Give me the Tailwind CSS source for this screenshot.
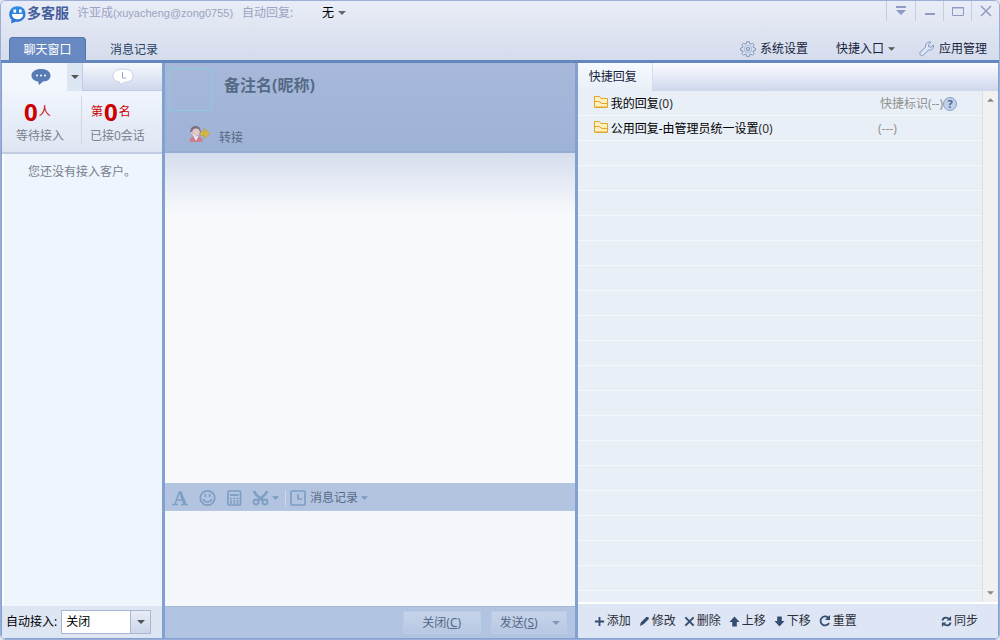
<!DOCTYPE html>
<html lang="zh-CN">
<head>
<meta charset="utf-8">
<meta name="viewport" content="width=device-width, initial-scale=1">
<title>多客服</title>
<script src="https://cdn.jsdelivr.net/npm/@tailwindcss/browser@4"></script>
</head>
<body class="flex h-screen flex-col overflow-hidden rounded-md border border-[#9daed6] bg-[#dfe5f3] font-['Noto_Sans','Noto_Sans_CJK_SC',sans-serif] text-xs leading-4 text-[#16233c]">

<header class="flex shrink-0 flex-col border-b-3 border-[#6587bf] bg-linear-to-b from-[#e9edf7] to-[#d5dcec]">
  <div class="flex h-9 items-start pl-2">
    <div class="flex h-6 items-center">
      <svg class="mt-1 h-[18px] w-[18px]" viewBox="0 0 18 18" aria-hidden="true">
        <defs><linearGradient id="lg" x1="0" y1="0" x2="0" y2="1"><stop offset="0" stop-color="#2f8fe8"/><stop offset="1" stop-color="#2a6fd6"/></linearGradient></defs>
        <path d="M8.500.2C3.500.2.200 3.600.200 8c0 2.600.8 4.200 2.300 5.500L2.200 17.500l4-1.800C12 16.500 16.500 13 16.500 8S13.500.2 8.500.2z" fill="url(#lg)"/>
        <rect x="4.500" y="3.500" width="2.600" height="3.200" fill="#fff"/><rect x="10" y="3.500" width="2.600" height="3.200" fill="#fff"/>
        <path d="M3 8h11c0 3.800-2.300 5.300-5.500 5.300S3 11.800 3 8z" fill="#fff"/>
      </svg>
      <h1 class="text-sm font-bold text-[#455f9c]">多客服</h1>
      <span class="ml-2 w-[165px] whitespace-nowrap text-[#9ba4c2]">许亚成<span class="font-['Liberation_Sans',sans-serif] text-[11px]">(xuyacheng@zong0755)</span></span>
      <span class="w-20 text-[#9ba4c2]">自动回复:</span>
      <button class="flex items-center gap-1 text-black">无<svg class="h-1 w-2" viewBox="0 0 8 4" fill="#666"><path d="M0 0h8L4 4z"/></svg></button>
    </div>
    <div class="ml-auto flex h-5 text-[#8f9bc4]">
      <button aria-label="菜单" class="flex w-[29px] items-center justify-center border-l border-[#c5cde4]"><svg class="h-3 w-3" viewBox="0 0 12 12" fill="#8f9bc4"><path d="M1 1h10v2H1zM1 5h10l-5 5z"/></svg></button>
      <button aria-label="最小化" class="flex w-7 items-center justify-center border-l border-[#c5cde4]"><svg class="h-3 w-3" viewBox="0 0 12 12" fill="#8f9bc4"><path d="M1 8h10v2H1z"/></svg></button>
      <button aria-label="最大化" class="flex w-7 items-center justify-center border-l border-[#c5cde4]"><svg class="h-3 w-3" viewBox="0 0 12 12" fill="none" stroke="#8f9bc4"><path d="M.5 2.500h11v8H.5zM0 3h12"/></svg></button>
      <button aria-label="关闭窗口" class="flex w-7 items-center justify-center border-l border-[#c5cde4]"><svg class="h-3 w-3" viewBox="0 0 12 12" fill="none" stroke="#8f9bc4" stroke-width="1.500"><path d="M1 1l10 10M11 1L1 11"/></svg></button>
    </div>
  </div>
  <div class="flex h-[23px] items-center pr-3 pl-2">
    <nav class="flex h-[23px]">
      <button class="w-[77px] rounded-t-sm border border-b-0 border-[#5574aa] bg-[#6788c0] pt-px text-white">聊天窗口</button>
      <button class="w-24 pt-0.5 text-[#244063]">消息记录</button>
    </nav>
    <div class="ml-auto flex items-center">
      <button class="flex items-center gap-1"><svg class="h-4 w-4" viewBox="0 0 16 16" fill="none" stroke="#8190b5"><path d="M6.700.800h2.600l.4 1.900 1.200.5 1.600-1.100 1.600 1.700-1.100 1.600.5 1.200 1.800.4v2.300l-1.800.4-.5 1.200 1.100 1.600-1.600 1.700-1.600-1.100-1.200.5-.4 1.800H6.700l-.4-1.800-1.200-.5-1.600 1.100-1.600-1.700L3 10.900l-.5-1.200-1.800-.4V7l1.800-.4L3 5.400 1.900 3.800l1.600-1.700 1.600 1.100 1.200-.5z" fill="#dbe4f4"/><circle cx="8" cy="8.100" r="3.800" stroke="#a6b5d6"/><circle cx="8" cy="8.100" r="1.700" fill="#c6d2ea"/></svg>系统设置</button>
      <button class="ml-7 flex items-center gap-1">快捷入口<svg class="h-1 w-[7px]" viewBox="0 0 8 4" fill="#555"><path d="M0 0h8L4 4z"/></svg></button>
      <button class="ml-6 flex items-center gap-1"><svg class="h-4 w-4" viewBox="0 0 16 16" fill="#dbe4f4" stroke="#8294bd"><path d="M12 1.200C9 .300 6 2.500 6.500 6L1.500 11c-2 2 1 5 3 3l5-5c3.500.6 5.500-2 4.800-5L11.800 6.300 9.700 5.600 9.500 3.700z"/></svg>应用管理</button>
    </div>
  </div>
</header>

<main class="flex min-h-0 flex-1 gap-[3px] bg-[#82a0d0] px-px pb-px">

  <aside class="flex w-40 shrink-0 flex-col bg-[#f0f5fd]">
    <div class="flex h-7">
      <button aria-label="当前会话" class="flex w-[65px] items-center justify-center bg-[#f2f6fd] pl-3"><svg class="h-4 w-5" viewBox="0 0 20 16" fill="#567bb5"><path d="M10 0C4.500 0 .5 2.500.5 6.500c0 3.300 2.700 5.300 6.500 6L8 16l4-3.500c5-.3 7.500-2.500 7.500-6C19.500 2.500 15.500 0 10 0z"/><g fill="#fff"><circle cx="6" cy="6.500" r="1"/><circle cx="10" cy="6.500" r="1"/><circle cx="14" cy="6.500" r="1"/></g></svg></button>
      <button aria-label="会话选项" class="flex w-[15px] items-center justify-center bg-[#dce5f2]"><svg class="h-1 w-2" viewBox="0 0 8 4" fill="#555"><path d="M0 0h8L4 4z"/></svg></button>
      <button aria-label="历史会话" class="flex flex-1 items-center justify-center border-b border-l border-[#c0cce5] bg-linear-to-b from-[#f6f8fd] to-[#cfd8ec]"><svg class="h-[18px] w-[22px]" viewBox="0 0 22 18"><path d="M11 1C5 1 1 3.500 1 7.800c0 3.400 3 5.700 7 6.400L8 17l4.500-2.800C18 14 21 11.500 21 7.800 21 3.500 17 1 11 1z" fill="#fff" stroke="#c5d0e6"/><path d="M10.500 4v6H14" fill="none" stroke="#98a6c4"/></svg></button>
    </div>
    <div class="flex h-[63px] items-center border-b-2 border-[#c3cde1] bg-linear-to-b from-[#f0f5fd] to-[#dfe6f3] pb-1 text-[#7b8290]">
      <div class="w-20 border-r border-[#d0d8e8] pl-[14px]">
        <div class="flex items-center pl-2 text-[#cc0000]"><strong class="text-2xl leading-8">0</strong><span class="pl-px">人</span></div>
        <div>等待接入</div>
      </div>
      <div class="flex-1 pl-2">
        <div class="flex items-center text-[#cc0000]"><span class="pl-px">第</span><strong class="px-px text-2xl leading-8">0</strong><span>名</span></div>
        <div class="whitespace-nowrap">已接0会话</div>
      </div>
    </div>
    <p class="min-h-0 flex-1 border-l-2 border-white bg-[#eff5fd] pt-2.5 pl-6 text-[#777f8c]">您还没有接入客户。</p>
    <div class="flex h-8 items-center gap-1 bg-[#dfe6f3] pl-1 text-black">
      <label for="auto" class="whitespace-nowrap">自动接入:</label>
      <div class="grid h-6 w-[90px] grid-cols-1 items-center">
        <select id="auto" class="col-start-1 row-start-1 h-6 appearance-none border border-[#a9b5d2] bg-white pb-px pl-1"><option>关闭</option><option>开启</option></select>
        <span class="pointer-events-none col-start-1 row-start-1 mr-px flex h-[22px] w-5 items-center justify-center justify-self-end border-l border-[#a9b5d2] bg-linear-to-b from-[#e8edf7] to-[#cdd6ea]"><svg class="h-1 w-2" viewBox="0 0 8 4" fill="#555"><path d="M0 0h8L4 4z"/></svg></span>
      </div>
    </div>
  </aside>

  <section class="flex min-w-0 flex-1 flex-col text-[#546a85]">
    <div class="flex h-[90px] shrink-0 gap-3 border-b-2 border-[#96add3] bg-linear-to-b from-[#a7b8da] to-[#9fb3d7] pt-1 pl-1">
      <div class="mt-px h-[43px] w-[43px] shrink-0 border border-[#8acbdc]"></div>
      <h2 class="pt-2 text-base leading-5 font-bold">备注名(昵称)</h2>
    </div>
    <div class="z-10 -mt-7 mb-1 flex h-6 shrink-0 items-center pl-6">
      <button class="flex items-center gap-2 pt-0.5">
        <svg class="mb-2 h-[18px] w-[22px]" viewBox="0 0 22 18"><path d="M11 6.500h4V3l6 5.500-6 5.500v-3.500h-4z" fill="#d4b645" stroke="#b09c58" stroke-width=".6"/><path d="M.5 17c0-4 2-6 6.500-6s6.500 2 6.500 6z" fill="#cc7f93"/><path d="M4.500 11l2.500 5 2.500-5z" fill="#eef0f8"/><circle cx="6.500" cy="6" r="5.200" fill="#7d6f80"/><circle cx="7" cy="7.200" r="3.800" fill="#e0c8c8"/><path d="M2.500 7c0 3 2 4 4 3.500" fill="none" stroke="#e8e8f2"/></svg>
        转接
      </button>
    </div>
    <div class="min-h-0 flex-1 bg-[#f7f9fc] bg-[linear-gradient(#d6deed,#f7f9fc_60px)]"></div>
    <div class="flex h-7 shrink-0 items-center border-b border-[#b8c7e0] bg-[#b3c4e1] pt-[3px] pl-1.5">
      <button aria-label="字体" class="flex w-7"><svg class="h-[18px] w-[18px]" viewBox="0 0 18 18" fill="none" stroke="#7d9fc5"><path d="M8.500 2.500 4 15" stroke-width="1.500"/><path d="M9 2.500 14 15" stroke-width="3"/><path d="M5.500 11h6M1 15.500h6M10 15.500h7" stroke-width="1.500"/></svg></button>
      <button aria-label="表情" class="flex w-[27px]"><svg class="h-[18px] w-[18px]" viewBox="0 0 18 18" fill="none" stroke="#7d9fc5" stroke-width="1.700"><circle cx="8.500" cy="9" r="7.200"/><path d="M6.300 5v3M10.700 5v3M4.500 10c.5 4 7.500 4 8 0"/></svg></button>
      <button aria-label="计算器" class="flex w-[26px]"><svg class="h-[18px] w-[18px]" viewBox="0 0 18 18" fill="none" stroke="#7d9fc5" stroke-width="1.700"><rect x="2" y="2" width="12.500" height="14" rx="1"/><path d="M4 6h8.500" stroke-width="2"/><path d="M4 9.500h9M4 12h9M4 14h9" stroke-dasharray="2 1.200"/></svg></button>
      <button aria-label="截图" class="flex w-[33px] items-center gap-0.5"><svg class="h-[18px] w-[18px]" viewBox="0 0 18 18" fill="none" stroke="#7d9fc5" stroke-width="2.600"><path d="M2 2c1 4 5 6 8.500 9M15 2c-1 4-5 6-8.500 9"/><circle cx="4" cy="13" r="2.500" stroke-width="1.900"/><circle cx="13" cy="13" r="2.500" stroke-width="1.900"/></svg><svg class="h-1 w-[7px]" viewBox="0 0 8 4" fill="#7898bd"><path d="M0 0h8L4 4z"/></svg></button>
      <button class="flex items-center gap-1 border-l border-[#cbd7ea] pl-1"><svg class="h-4 w-4" viewBox="0 0 16 16" fill="none" stroke="#7d9fc5" stroke-width="1.700"><rect x="1" y="1" width="14" height="14" rx="1"/><path d="M8 4v5h4"/></svg>消息记录<svg class="-ml-px h-1 w-[7px]" viewBox="0 0 8 4" fill="#7898bd"><path d="M0 0h8L4 4z"/></svg></button>
    </div>
    <textarea aria-label="输入消息" class="block h-[95px] w-full shrink-0 resize-none bg-[#f4f8fd] p-2 outline-none"></textarea>
    <div class="flex h-8 shrink-0 items-center justify-end border-t border-[#a5b9da] bg-[#b1c4e1] pr-2">
      <button class="mr-[10px] h-[23px] w-[78px] border border-[#bdcbe4] bg-linear-to-b from-[#c6d4ea] to-[#b9c8e3]">关闭(<u>C</u>)</button>
      <button class="h-[23px] w-14 border border-[#bdcbe4] bg-linear-to-b from-[#c6d4ea] to-[#b9c8e3]">发送(<u>S</u>)</button>
      <button aria-label="发送选项" class="flex h-[23px] w-5 items-center justify-center border border-l-0 border-[#bdcbe4] bg-linear-to-b from-[#c6d4ea] to-[#b9c8e3]"><svg class="h-1 w-2" viewBox="0 0 8 4" fill="#8195b5"><path d="M0 0h8L4 4z"/></svg></button>
    </div>
  </section>

  <section class="flex w-[42.2%] shrink-0 flex-col bg-[#dee5f4]">
    <div class="flex h-7 shrink-0 bg-linear-to-b from-[#fbfcff] to-[#ced7ec]">
      <button class="w-[75px] border-r border-[#d5deef] bg-linear-to-b from-[#f7faff] to-[#e8eff7] pr-1">快捷回复</button>
    </div>
    <div class="flex min-h-0 flex-1 border-b-2 border-white">
      <div class="min-w-0 flex-1 bg-[#e8eff6] bg-[repeating-linear-gradient(#e8eff6_0_24px,#f4f7fb_24px_25px)] text-black">
        <div class="flex h-[25px] items-center pr-[25px] pl-[15px]">
          <svg class="mb-1 h-4 w-4" viewBox="0 0 16 16" fill="#fff0bd" stroke="#dfa52d"><path d="M1.500 13V2.500h5l1.500 2h6.500V13z"/><path d="M2 7.500h4l3 2h5.500M1.500 13.500h13" fill="none"/></svg>
          <span class="pl-0.5">我的回复<span class="text-[#333]">(0)</span></span>
          <span class="ml-auto text-[#929292]">快捷标识(--)</span>
          <button aria-label="帮助" class="h-[14px] w-[14px] rounded-full border border-[#8ca3c8] bg-[#c2d0e9] text-[11px] leading-3 font-bold text-[#4d668f]">?</button>
        </div>
        <div class="flex h-[25px] items-center pl-[15px]">
          <svg class="mb-1 h-4 w-4" viewBox="0 0 16 16" fill="#fff0bd" stroke="#dfa52d"><path d="M1.500 13V2.500h5l1.500 2h6.500V13z"/><path d="M2 7.500h4l3 2h5.500M1.500 13.500h13" fill="none"/></svg>
          <span class="pl-0.5">公用回复-由管理员统一设置<span class="text-[#333]">(0)</span></span>
          <span class="ml-auto w-[104px] text-[#929292]">(---)</span>
        </div>
      </div>
      <div class="flex w-4 shrink-0 flex-col items-center justify-between border-l border-[#dedfe2] bg-[#f1f1f2] py-[7px]">
        <svg class="h-1 w-[7px]" viewBox="0 0 8 4" fill="#888"><path d="M0 4h8L4 0z"/></svg>
        <svg class="h-1 w-[7px]" viewBox="0 0 8 4" fill="#888"><path d="M0 0h8L4 4z"/></svg>
      </div>
    </div>
    <div class="flex h-[34px] shrink-0 items-center gap-2 pr-5 pl-4 text-[#2b2f38]">
      <button class="flex items-center gap-0.5"><svg class="h-[11px] w-[11px]" viewBox="0 0 12 12" stroke="#344d70" stroke-width="2"><path d="M6 1v10M1 6h10"/></svg>添加</button>
      <button class="flex items-center gap-0.5"><svg class="h-[11px] w-[11px]" viewBox="0 0 12 12" fill="#344d70"><path d="M1 11l1-4 6-6h2l1 2-6 6z"/></svg>修改</button>
      <button class="flex items-center gap-0.5"><svg class="h-[11px] w-[11px]" viewBox="0 0 12 12" stroke="#344d70" stroke-width="2.200"><path d="M1.500 1.500l9 9M10.500 1.500l-9 9"/></svg>删除</button>
      <button class="flex items-center gap-0.5"><svg class="h-[11px] w-[11px]" viewBox="0 0 12 12" fill="#344d70"><path d="M6 .5l5.500 6H8.500V11.500h-5V6.500H.5z"/></svg>上移</button>
      <button class="flex items-center gap-0.5"><svg class="h-[11px] w-[11px]" viewBox="0 0 12 12" fill="#344d70"><path d="M6 11.500l5.500-6H8.500V.5h-5v5H.5z"/></svg>下移</button>
      <button class="flex items-center gap-0.5"><svg class="h-3 w-3" viewBox="0 0 12 12" fill="none" stroke="#344d70" stroke-width="1.800"><path d="M10 8A4.500 4.500 0 1 1 9 2.500"/><path d="M11 0v5H6z" fill="#344d70" stroke="none"/></svg>重置</button>
      <button class="ml-auto flex items-center gap-0.5"><svg class="h-[11px] w-[11px]" viewBox="0 0 12 12" fill="none" stroke="#344d70" stroke-width="2"><path d="M1.500 5C2.500 1 7 1 9 3.500M10.500 7C9.500 11 5 11 3 8.500"/><path d="M11 0v5H6zM1 12V7h5z" fill="#344d70" stroke="none"/></svg>同步</button>
    </div>
  </section>
</main>
</body>
</html>
